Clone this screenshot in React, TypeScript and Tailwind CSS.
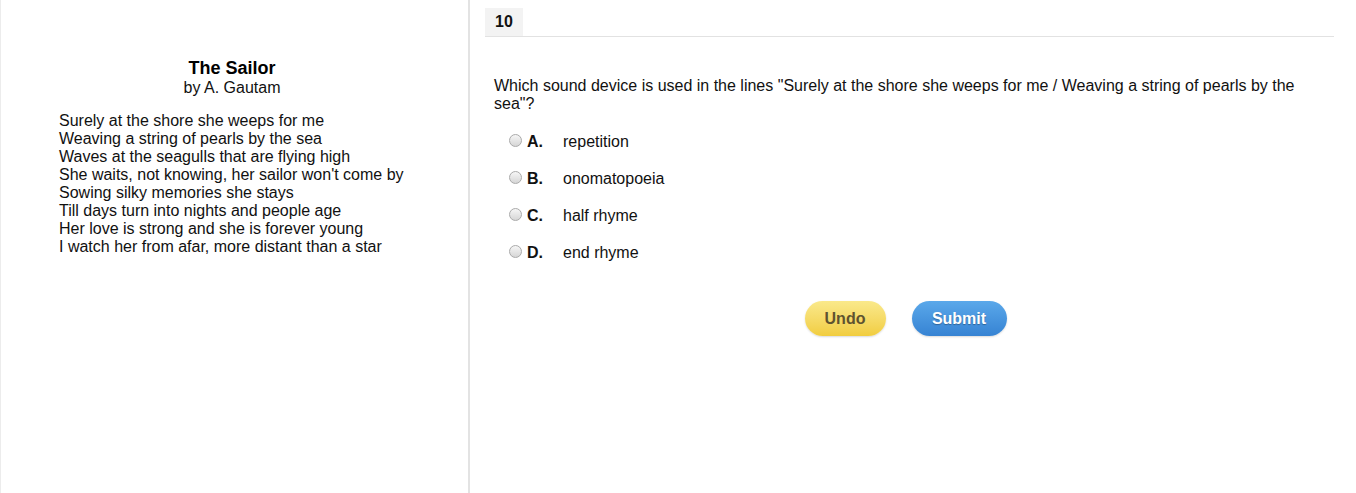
const poem = [
  'Surely at the shore she weeps for me',
  'Weaving a string of pearls by the sea',
  'Waves at the seagulls that are flying high',
  "She waits, not knowing, her sailor won't come by",
  'Sowing silky memories she stays',
  'Till days turn into nights and people age',
  'Her love is strong and she is forever young',
  'I watch her from afar, more distant than a star',
];

const options = [
  { key: 'A.', text: 'repetition' },
  { key: 'B.', text: 'onomatopoeia' },
  { key: 'C.', text: 'half rhyme' },
  { key: 'D.', text: 'end rhyme' },
];

export default function App() {
  return (
    <div className="flex h-[493px] w-[1356px] bg-white text-[16px] text-[#111] font-['Liberation_Sans',Arial,sans-serif]">
      {/* passage */}
      <div className="w-[470px] shrink-0 border-l border-l-[#ececec] border-r-2 border-r-[#e3e3e3] pt-[58px]">
        <h1 className="text-center text-[18px] font-bold leading-[21px] text-black pr-[5px]">The Sailor</h1>
        <p className="text-center leading-[18px] pr-[5px]">by A. Gautam</p>
        <div className="mt-[15px] pl-[58px]">
          {poem.map((line) => (
            <p key={line} className="leading-[18px]">{line}</p>
          ))}
        </div>
      </div>

      {/* question */}
      <div className="flex-1 pl-[15px] pr-[22px]">
        <div className="mt-[8px] border-b border-[#e2e2e2]">
          <span className="inline-block bg-[#f3f3f3] px-[10px] text-[16px] font-bold leading-[28px]">10</span>
        </div>
        <p className="mt-[40px] pl-[9px] pr-[30px] leading-[18px]">
          Which sound device is used in the lines "Surely at the shore she weeps for me / Weaving a string of pearls by the sea"?
        </p>
        <div className="mt-[10px] pl-[24px]">
          {options.map((o) => (
            <label key={o.key} className="flex h-[37px] items-center">
              <span className="h-[13px] w-[13px] -translate-y-[1px] rounded-full border border-[#aaaaaa] bg-gradient-to-b from-[#f6f6f6] to-[#d6d6d6]" />
              <span className="ml-[5px] w-[36px] font-bold">{o.key}</span>
              <span>{o.text}</span>
            </label>
          ))}
        </div>
        <div className="mt-[30px] flex justify-center gap-[26px] pr-[8px]">
          <button
            type="button"
            className="h-[35px] w-[81px] rounded-full bg-gradient-to-b from-[#fae98a] to-[#f1cd3e] text-[16px] font-bold text-[#5e5330] shadow-[0_1px_2px_rgba(0,0,0,0.15)]"
          >
            Undo
          </button>
          <button
            type="button"
            className="h-[35px] w-[95px] rounded-full bg-gradient-to-b from-[#5aa8ea] to-[#3683d3] text-[16px] font-bold text-white [text-shadow:0_1px_1px_rgba(0,0,0,0.3)] shadow-[0_1px_2px_rgba(0,0,0,0.15)]"
          >
            Submit
          </button>
        </div>
      </div>
    </div>
  );
}
